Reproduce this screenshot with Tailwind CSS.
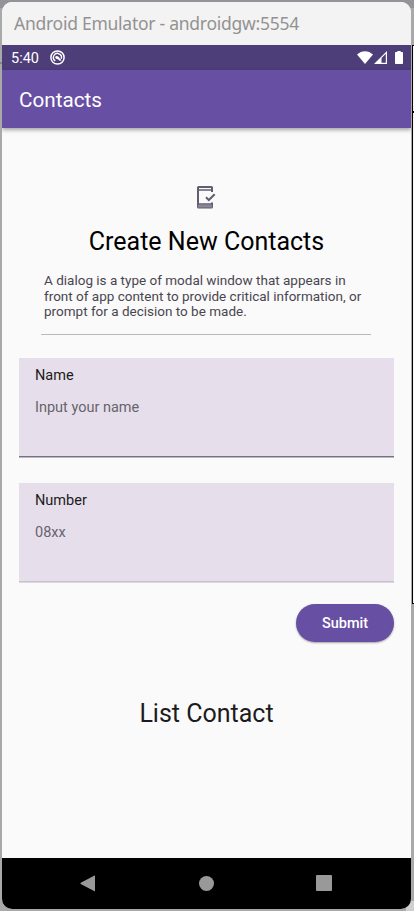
<!DOCTYPE html>
<html lang="en">
<head>
<meta charset="utf-8">
<title>Contacts</title>
<script src="https://cdn.jsdelivr.net/npm/@tailwindcss/browser@4"></script>
</head>
<body class="relative h-[911px] w-[414px] overflow-hidden bg-[#a9a9a9] pl-[2px] pt-[2px] font-['Roboto',sans-serif]">
  <!-- desktop behind the emulator window -->
  <div class="absolute left-0 top-0 h-[8px] w-full bg-[#93939a]"></div>
  <div class="absolute left-0 top-[62px] h-[2px] w-[2px] bg-[#858588]"></div>
  <div class="absolute left-[412px] top-[45px] h-[559px] w-[2px] border border-r-0 border-black bg-[#f4f4f4]"></div>
  <div class="absolute left-[412px] top-[111px] h-[2px] w-[2px] bg-black"></div>
  <div class="absolute bottom-0 right-0 h-[10px] w-[8px] bg-[#d0d0d0]"></div>

  <div class="relative flex h-[907px] w-[409px] flex-col overflow-hidden rounded-[10px] bg-[#fafafa]">
    <header class="flex h-[43px] shrink-0 items-center bg-[#f3f3f3] pb-[2px] pl-[12px]">
      <span class="whitespace-nowrap font-['Noto_Sans',sans-serif] text-[17.5px] leading-[24px] tracking-[-0.26px] text-[#929292]">Android Emulator - androidgw:5554</span>
    </header>

    <div class="flex h-[25px] shrink-0 items-center bg-[#4d3d79] pl-[9px] pr-[8px] text-white">
      <span class="w-[39px] pt-[2px] text-[14.5px] leading-[23px]">5:40</span>
      <svg class="h-[15px] w-[15px]" viewBox="0 0 15 15" fill="none" stroke="#fff">
        <circle cx="7.5" cy="7.5" r="6.6" stroke-width="1.5"/>
        <path d="M5.3 10.8A4 4 0 1 1 11.2 8.8" stroke-width="1.4"/>
        <path d="M5 7.2Q6.6 5.2 8.6 6.8L11.6 10.4L9.4 10.8L8 9.3Q6 9.6 5 7.2z" fill="#fff" stroke="none"/>
      </svg>
      <div class="ml-auto flex items-center">
        <svg class="h-[13px] w-[16px]" viewBox="0 0 16 13"><path d="M0 3.6C4.6-.9 11.4-.9 16 3.6L8 13z" fill="#fff"/></svg>
        <svg class="ml-px h-[13px] w-[14px]" viewBox="0 0 14 13"><path d="M12.4 1.4V12.3H1.5z" fill="none" stroke="#fff" stroke-width="1.2"/><path d="M1 12.6L7.5 6.2V12.6z" fill="#fff"/></svg>
        <svg class="ml-[7px] h-[13px] w-[8px]" viewBox="0 0 8 13"><path d="M2.3 0h3.4v1H7.2q.8 0 .8.8v10.4q0 .8-.8.8H.8q-.8 0-.8-.8V1.8Q0 1 .8 1h1.5z" fill="#fff"/></svg>
      </div>
    </div>

    <div class="relative flex h-[58px] shrink-0 items-center bg-[#674fa3] pl-[17px] pt-[2px] shadow-[0_2px_4px_rgba(0,0,0,0.35)]">
      <h1 class="text-[20.7px] leading-[28px] text-white">Contacts</h1>
    </div>

    <main class="flex flex-1 flex-col px-[17px] pt-[57px]">
      <svg class="ml-[177px] h-[24px] w-[20px] shrink-0" viewBox="0 0 20 24" fill="none" stroke="#635d70">
        <path d="M16 7V2.5Q16 2 15.5 2H2.5Q2 2 2 2.5V22Q2 22.5 2.5 22.5H15.5Q16 22.5 16 22V17.5" stroke-width="2"/>
        <path d="M2 5H16" stroke-width="1.3"/>
        <path d="M2 21H16" stroke-width="3" stroke="#8b8696"/>
        <path d="M2 19H16" stroke-width="1.4"/>
        <path d="M10 12.3L12.8 15L18.7 9.2" stroke-width="2"/>
      </svg>
      <h2 class="mt-[15px] text-center text-[25px] leading-[36px] text-black">Create New Contacts</h2>
      <p class="ml-[25px] mt-[13px] whitespace-nowrap text-[13.5px] leading-[15.7px] text-[#4a4650]">A dialog is a type of modal window that appears in<br>front of app content to provide critical information, or<br>prompt for a decision to be made.</p>
      <div class="ml-[22px] mt-[14px] h-px w-[330px] shrink-0 bg-[#bbbabb]"></div>

      <div class="mt-[23px] flex h-[100px] shrink-0 flex-col border-b border-[#bcb7c1] bg-[#e6dfeb]">
        <div class="flex flex-1 flex-col border-b border-[#77727c] pl-[16px] pt-[8px]">
          <label class="text-[14.5px] leading-[20px] text-[#1d1b20]">Name</label>
          <span class="mt-[12px] text-[14.5px] leading-[20px] text-[#68636d]">Input your name</span>
        </div>
      </div>

      <div class="mt-[25px] flex h-[100px] shrink-0 flex-col border-b border-[#dcd7e0] bg-[#e6dfeb]">
        <div class="flex flex-1 flex-col border-b border-[#c8c2cc] pl-[16px] pt-[8px]">
          <label class="text-[14.5px] leading-[20px] text-[#1d1b20]">Number</label>
          <span class="mt-[12px] text-[14.5px] leading-[20px] text-[#68636d]">08xx</span>
        </div>
      </div>

      <button class="mt-[21px] h-[38px] w-[98px] shrink-0 self-end rounded-full bg-[#674fa3] pt-px text-[14.5px] font-medium text-white shadow-[0_1px_2px_rgba(0,0,0,0.35)]">Submit</button>

      <h2 class="mt-[54px] text-center text-[25px] leading-[36px] text-[#1d1b20]">List Contact</h2>
    </main>

    <nav class="flex h-[51px] shrink-0 items-center bg-black pb-px pl-[78px]">
      <svg class="h-[17px] w-[15px]" viewBox="0 0 16 18"><path d="M.8 8.3L15 .6Q16 .2 16 1V16.6Q16 17.4 15 17L.8 9.5Q0 8.9.8 8.3z" fill="#999"/></svg>
      <div class="ml-[104px] h-[15px] w-[15px] rounded-full bg-[#999]"></div>
      <div class="ml-[102px] h-[16px] w-[16px] rounded-[1px] bg-[#999]"></div>
    </nav>
  </div>
</body>
</html>
